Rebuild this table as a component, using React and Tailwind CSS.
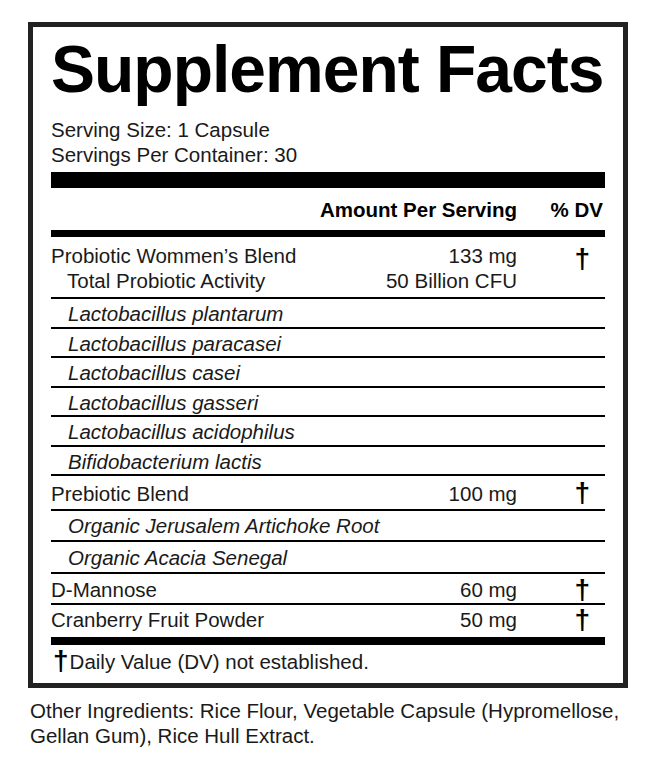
import React from 'react';

const blend = [
  'Lactobacillus plantarum',
  'Lactobacillus paracasei',
  'Lactobacillus casei',
  'Lactobacillus gasseri',
  'Lactobacillus acidophilus',
  'Bifidobacterium lactis',
];

const Dagger = () => (
  <span className="font-bold text-[28px] leading-none text-black">†</span>
);

// one row of the facts table: name, amount, dagger column
const Row = ({ name, amount, dv, className = '' }) => (
  <div className={`flex items-center border-b-2 border-black ${className}`}>
    <div className="flex-1">{name}</div>
    <div className="text-right">{amount}</div>
    <div className="w-[88px] flex justify-end pr-[15px]">{dv && <Dagger />}</div>
  </div>
);

export default function App() {
  return (
    <div
      className="w-[649px] h-[759px] bg-white text-[#1a1a1a] text-[20.5px] leading-[25px]"
      style={{ fontFamily: '"Liberation Sans", Arial, sans-serif' }}
    >
      <div className="pt-[22px] pl-[28px]">
        <div className="w-[600px] border-[5px] border-[#222] px-[18px] pt-[9px] pb-[8px]">
          <h1 className="text-[66px] leading-none font-bold text-black tracking-[-1px] h-[66px] whitespace-nowrap">
            Supplement Facts
          </h1>

          <div className="mt-[15px]">
            <div>Serving Size: 1 Capsule</div>
            <div>Servings Per Container: 30</div>
          </div>

          <div className="mt-[5px] h-[16px] bg-black" />

          <div className="flex items-center pt-[9px] pb-[8px] font-bold text-black">
            <div className="flex-1" />
            <div>Amount Per Serving</div>
            <div className="w-[88px] text-right pr-[2px]">% DV</div>
          </div>

          <div className="h-[7px] bg-black" />

          {/* probiotic blend header */}
          <div className="flex border-b-2 border-black pt-[6px] pb-[4px]">
            <div className="flex-1">
              <div>Probiotic Wommen’s Blend</div>
              <div className="pl-[16px]">Total Probiotic Activity</div>
            </div>
            <div className="text-right">
              <div>133 mg</div>
              <div>50 Billion CFU</div>
            </div>
            <div className="w-[88px] flex justify-end items-start pr-[15px] pt-[2px]">
              <Dagger />
            </div>
          </div>

          {blend.map((b) => (
            <div key={b} className="border-b-2 border-black italic pl-[17px] pt-[2px] leading-[25.5px]">
              {b}
            </div>
          ))}

          <Row name="Prebiotic Blend" amount="100 mg" dv className="h-[35px] pt-[1px]" />
          <div className="border-b-2 border-black italic pl-[17px] h-[31px] flex items-center">
            Organic Jerusalem Artichoke Root
          </div>
          <div className="border-b-2 border-black italic pl-[17px] h-[32px] flex items-center">
            Organic Acacia Senegal
          </div>
          <Row name="D-Mannose" amount="60 mg" dv className="h-[31px] pt-[2px]" />
          <div className="flex items-center h-[32px] pb-[3px]">
            <div className="flex-1">Cranberry Fruit Powder</div>
            <div className="text-right">50 mg</div>
            <div className="w-[88px] flex justify-end pr-[15px]">
              <Dagger />
            </div>
          </div>

          <div className="h-[8px] bg-black" />

          <div className="flex items-center pt-[2px] pl-[2px]">
            <Dagger />
            <span className="ml-[1px]">Daily Value (DV) not established.</span>
          </div>
        </div>
      </div>

      <p className="pl-[30px] pt-[10px] pr-[20px]">
        Other Ingredients: Rice Flour, Vegetable Capsule (Hypromellose, Gellan Gum), Rice Hull Extract.
      </p>
    </div>
  );
}
